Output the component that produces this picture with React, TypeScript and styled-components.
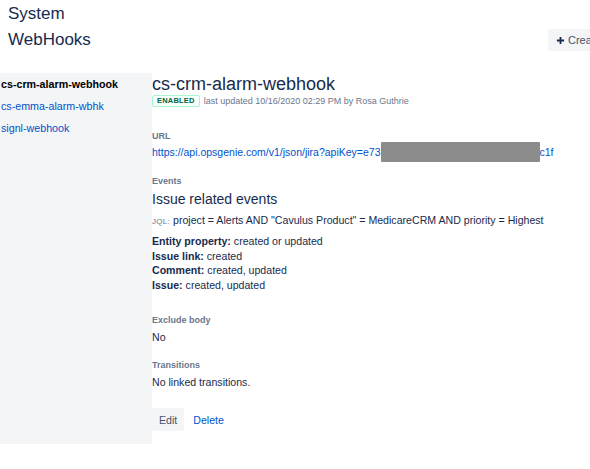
import { FC } from 'react';
import styled, { createGlobalStyle } from 'styled-components';

const GlobalStyle = createGlobalStyle`
  html, body {
    margin: 0;
    padding: 0;
    background: #fff;
  }
  body {
    font-family: "Liberation Sans", Arial, sans-serif;
    color: #172b4d;
    overflow: hidden;
  }
`

const Page = styled.div`
  width: 590px;
  height: 469px;
  overflow: hidden;
`

const Header = styled.div`
  padding: 1px 0 0 8px;
`

const PageTitle = styled.div`
  font-size: 17px;
  line-height: 26px;
  color: #172b4d;
`

// the button runs past the right edge of the window, as in the cropped page
const TitleRow = styled.div`
  display: grid;
  grid-template-columns: 1fr 42px;
  align-items: center;
`

const CreateButton = styled.button`
  justify-self: start;
  width: max-content;
  height: 22px;
  padding: 0 8px;
  border: none;
  border-radius: 3px;
  background: #f4f5f7;
  color: #42526e;
  font-family: inherit;
  font-size: 11px;
  white-space: nowrap;
  display: flex;
  align-items: center;
  gap: 3px;
`

const Main = styled.div`
  display: flex;
  margin-top: 20px;
`

const Sidebar = styled.nav`
  width: 152px;
  flex-shrink: 0;
  background: #f4f5f7;
  display: flex;
  flex-direction: column;
`

const NavItem = styled.a<{ $active?: boolean }>`
  display: block;
  padding-left: 1px;
  font-size: 10.7px;
  line-height: 22px;
  text-decoration: none;
  color: ${p => (p.$active ? '#000' : '#0052cc')};
  font-weight: ${p => (p.$active ? 'bold' : 'normal')};
`

const Content = styled.section`
  flex: 1;
  padding-bottom: 13px;
`

const Heading = styled.h1`
  margin: 0;
  font-size: 18px;
  font-weight: normal;
  line-height: 22px;
  color: #172b4d;
`

const StatusRow = styled.div`
  display: flex;
  align-items: center;
  gap: 4px;
  height: 12px;
`

const Lozenge = styled.span`
  box-sizing: border-box;
  height: 12px;
  padding: 0 4px;
  border: 1px solid #abf5d1;
  border-radius: 2px;
  background: #f6fffa;
  color: #006644;
  font-size: 7.5px;
  font-weight: bold;
  letter-spacing: 0.2px;
  line-height: 10px;
`

const Meta = styled.span`
  font-size: 9px;
  color: #6b778c;
`

const Label = styled.div<{ $gap: number }>`
  margin-top: ${p => p.$gap}px;
  font-size: 9px;
  line-height: 12px;
  font-weight: 600;
  color: #6b778c;
`

const LinkRow = styled.div`
  font-size: 10.5px;
  line-height: 20px;
  height: 20px;
  white-space: nowrap;
`

const Link = styled.a`
  color: #0052cc;
  text-decoration: none;
`

const Redacted = styled.span`
  display: inline-block;
  width: 159px;
  height: 20px;
  vertical-align: top;
  background: #8c8c8c;
  border-radius: 1px;
`

const SubHeading = styled.h2`
  margin: 2px 0 0;
  font-size: 14px;
  font-weight: normal;
  line-height: 20px;
`

const Jql = styled.div`
  margin-top: 3px;
  font-size: 10.6px;
  line-height: 16px;
`

const JqlTag = styled.span`
  font-size: 8px;
  color: #6b778c;
  letter-spacing: 0.3px;
`

const EventList = styled.div`
  margin-top: 4px;
  font-size: 10.6px;
  line-height: 14.5px;
`

const Value = styled.div`
  margin-top: 3px;
  font-size: 10.6px;
  line-height: 16px;
`

const Actions = styled.div`
  display: flex;
  gap: 2px;
  margin-top: 18px;
`

const ActionButton = styled.button<{ $subtle?: boolean }>`
  height: 23px;
  padding: 0 7px;
  border: none;
  border-radius: 3px;
  font-family: inherit;
  font-size: 10.6px;
  background: ${p => (p.$subtle ? 'transparent' : '#f4f5f7')};
  color: ${p => (p.$subtle ? '#0052cc' : '#42526e')};
`

const PlusIcon: FC = () => (
  <svg width="9" height="9" viewBox="0 0 10 10">
    <path d="M5 1v8M1 5h8" stroke="#172b4d" strokeWidth="2" />
  </svg>
)

const events = [
  { name: 'Entity property', value: 'created or updated' },
  { name: 'Issue link', value: 'created' },
  { name: 'Comment', value: 'created, updated' },
  { name: 'Issue', value: 'created, updated' },
]

const App: FC = () => {
  return (
    <Page>
      <GlobalStyle />
      <Header>
        <PageTitle>System</PageTitle>
        <TitleRow>
          <PageTitle>WebHooks</PageTitle>
          <CreateButton>
            <PlusIcon />
            Create a WebHook
          </CreateButton>
        </TitleRow>
      </Header>
      <Main>
        <Sidebar>
          <NavItem $active>cs-crm-alarm-webhook</NavItem>
          <NavItem href="#">cs-emma-alarm-wbhk</NavItem>
          <NavItem href="#">signl-webhook</NavItem>
        </Sidebar>
        <Content>
          <Heading>cs-crm-alarm-webhook</Heading>
          <StatusRow>
            <Lozenge>ENABLED</Lozenge>
            <Meta>last updated 10/16/2020 02:29 PM by Rosa Guthrie</Meta>
          </StatusRow>

          <Label $gap={23}>URL</Label>
          <LinkRow>
            <Link href="#">
              https://api.opsgenie.com/v1/json/jira?apiKey=e73<Redacted />c1f
            </Link>
          </LinkRow>

          <Label $gap={13}>Events</Label>
          <SubHeading>Issue related events</SubHeading>
          <Jql>
            <JqlTag>JQL:</JqlTag> project = Alerts AND "Cavulus Product" = MedicareCRM AND priority = Highest
          </Jql>
          <EventList>
            {events.map(e => (
              <div key={e.name}>
                <b>{e.name}:</b> {e.value}
              </div>
            ))}
          </EventList>

          <Label $gap={22}>Exclude body</Label>
          <Value>No</Value>

          <Label $gap={14}>Transitions</Label>
          <Value>No linked transitions.</Value>

          <Actions>
            <ActionButton>Edit</ActionButton>
            <ActionButton $subtle>Delete</ActionButton>
          </Actions>
        </Content>
      </Main>
    </Page>
  );
}

export default App;
